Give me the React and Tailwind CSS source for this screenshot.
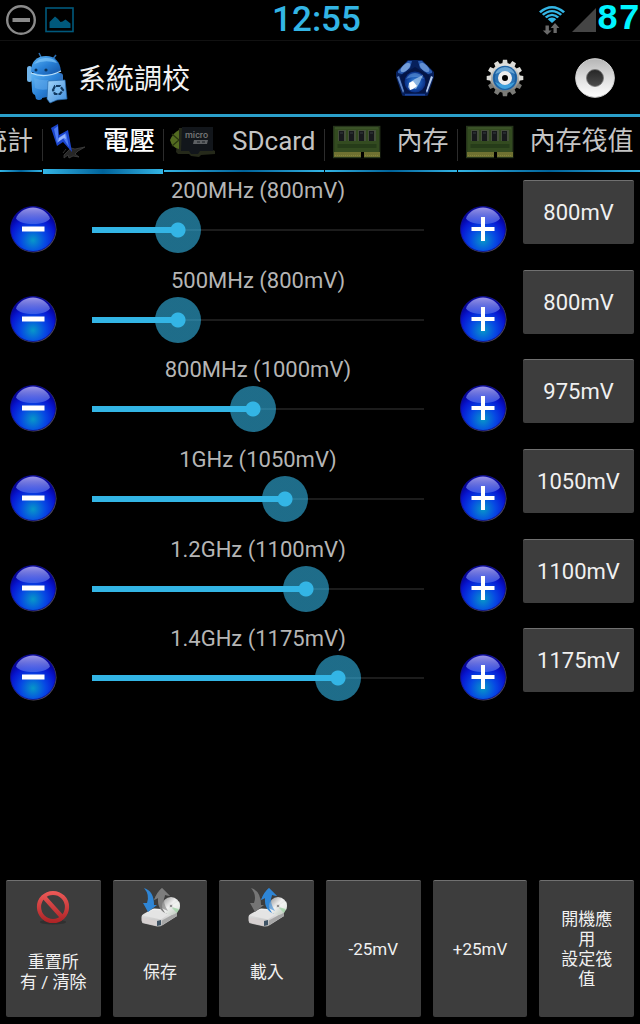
import { useState } from "react";

const MIN_MV = 600;
const MAX_MV = 1375;
const STEP_MV = 25;

const frequencies = [
  { id: "200", label: "200MHz (800mV)", mv: 800 },
  { id: "500", label: "500MHz (800mV)", mv: 800 },
  { id: "800", label: "800MHz (1000mV)", mv: 975 },
  { id: "1000", label: "1GHz (1050mV)", mv: 1050 },
  { id: "1200", label: "1.2GHz (1100mV)", mv: 1100 },
  { id: "1400", label: "1.4GHz (1175mV)", mv: 1175 },
];

const clamp = (mv) => Math.min(MAX_MV, Math.max(MIN_MV, mv));

/* ---------- Status bar icons ---------- */

const DndIcon = () => (
  <svg width="32" height="32" viewBox="0 0 32 32" fill="none">
    <circle cx="16" cy="16" r="13.8" stroke="#8a8a8a" strokeWidth="2.4" />
    <path d="M7.5 16h17.5" stroke="#8a8a8a" strokeWidth="4" />
  </svg>
);

const PictureIcon = () => (
  <svg width="30" height="26" viewBox="0 0 30 26" fill="none">
    <rect x="1" y="1" width="27" height="23.5" stroke="#00597c" strokeWidth="1.6" />
    <path
      d="M4.5 21v-6l5.500-5.500 3 2.500 2.500 3 2-.5 3-2 2.500 2 2.500 2v4.500z"
      fill="#00597c"
    />
  </svg>
);

const WifiIcon = () => (
  <svg width="28" height="30" viewBox="0 0 28 30">
    <path d="M14 18 1 6.500Q14-4.500 27 6.500z" fill="#33b5e5" />
    <g fill="none" stroke="#000" strokeWidth="1.300">
      <path d="M2.500 9.200Q14-.8 25.500 9.200" />
      <path d="M5.500 11.800Q14 4.200 22.500 11.800" />
      <path d="M8.500 14.200Q14 9.200 19.500 14.200" />
    </g>
    <path d="M7.500 20.500h3.400v5h2.800l-4.500 4.300-4.400-4.300h2.700z" fill="#6a6a6a" />
    <path d="M15.500 28v-5h-2.800l4.300-5 4.400 5h-2.600v5z" fill="#6a6a6a" />
  </svg>
);

const SignalIcon = () => (
  <svg width="25" height="26" viewBox="0 0 25 26">
    <path d="M0 25 24 1v24z" fill="#454545" />
  </svg>
);

/* ---------- Header icons ---------- */

const TunerIcon = () => (
  <svg width="42" height="52" viewBox="0 0 42 52">
    <defs>
      <linearGradient id="droid" x1="0" y1="0" x2="1" y2="1">
        <stop offset="0" stopColor="#61b7f5" />
        <stop offset=".5" stopColor="#2a82d8" />
        <stop offset="1" stopColor="#1252a4" />
      </linearGradient>
      <linearGradient id="card" x1="0" y1="0" x2="1" y2="1">
        <stop offset="0" stopColor="#a4d6fa" />
        <stop offset="1" stopColor="#3c8bdc" />
      </linearGradient>
    </defs>
    <path d="m13 1 3 6M30 3l-4 5" stroke="#2c6daf" strokeWidth="1.500" />
    <rect x="1" y="14" width="5" height="16" rx="2.500" fill="#70b4ea" />
    <rect x="31" y="21" width="6" height="16" rx="3" fill="#3274c2" />
    <path d="M5 21h29l-1 22q-1 3-4 3l-2 1h-6v-2l-5 1v1q-3 2-6 0l-1-4q-3-1-3-5z" fill="url(#droid)" />
    <path d="M5 20C5 9 11 4 20 4s14 6 15 15q-14 7-30 1z" fill="url(#droid)" />
    <path d="M8 12q5-7 13-6 7 0 10 5-12-4-23 1z" fill="#84c9fa" opacity=".65" />
    <path d="M5 21q14 6 30-2" stroke="#b9e0fb" strokeWidth="1.200" fill="none" />
    <path d="M8 26q8 3 15 2v9q-8 2-14-1z" fill="#69afed" opacity=".5" />
    <circle cx="10" cy="18" r="1.500" fill="#0b3157" />
    <circle cx="20" cy="18" r="1.600" fill="#0b3157" />
    <path d="m22 29 17-1 2 19-10 1-7 3-3-4z" fill="url(#card)" stroke="#2468ac" strokeWidth=".7" />
    <path
      d="m27 38 2-4h5l3 4-3 4h-5z"
      fill="#7cbdf2"
      stroke="#123a62"
      strokeWidth="2.200"
      strokeDasharray="4.500 1"
    />
  </svg>
);

const PentagonIcon = () => (
  <svg width="40" height="38" viewBox="0 0 40 38">
    <defs>
      <radialGradient id="pent">
        <stop offset="0" stopColor="#4a90dd" />
        <stop offset=".5" stopColor="#1a58b4" />
        <stop offset="1" stopColor="#0a2f86" />
      </radialGradient>
    </defs>
    <path d="M13 1h14l12 12v5l-6 18q0 1-2 1H9q-2 0-2-1L1 18v-5z" fill="#07205c" />
    <path d="M13 2h4l-2 7-8 6-4-1v-2z" fill="#2b5cb0" />
    <path d="M27 2h-4l2 7 8 6 4-1v-2z" fill="#2b5cb0" />
    <ellipse cx="10.500" cy="8.500" rx="6" ry="3" transform="rotate(-42 10.500 8.500)" fill="#86aee2" opacity=".8" />
    <ellipse cx="29.500" cy="8.500" rx="6" ry="3" transform="rotate(42 29.500 8.500)" fill="#6f9bd9" opacity=".8" />
    <path d="m2 18 2-1 5 15-1 2z" fill="#5f86c8" />
    <path d="m38 18-2-1-5 15 1 2z" fill="#b4cbee" />
    <path d="M10 35.800h20" stroke="#1c48a0" strokeWidth="1.500" />
    <path d="m20 8 15 9-5 17H10L5 17z" fill="#041546" />
    <circle cx="20" cy="23" r="10.500" fill="url(#pent)" />
    <path d="M11 20q3-6 9-6t9 6q-9-4-18 0z" fill="#6ea6e6" opacity=".5" />
    <path d="m14 24 6-4 8-4-3 7-4 7-3-1-3 2-2-3z" fill="#9fc3e8" opacity=".8" />
    <path d="m14 24 4-2 4 5-4 3-3 1z" fill="#fff" />
  </svg>
);

const teeth = [0, 30, 60, 90, 120, 150, 180, 210, 240, 270, 300, 330];

const GearIcon = () => (
  <svg width="38" height="38" viewBox="0 0 38 38">
    <defs>
      <linearGradient id="gear" x1="0" y1="0" x2="0" y2="38" gradientUnits="userSpaceOnUse">
        <stop offset="0" stopColor="#f4f4f2" />
        <stop offset=".6" stopColor="#a5a5a1" />
        <stop offset="1" stopColor="#5e5e5a" />
      </linearGradient>
    </defs>
    <circle cx="19" cy="19" r="15" fill="url(#gear)" />
    {teeth.map((deg) => (
      <path
        key={deg}
        d="m16.300 5 .6-4.300h4.200l.6 4.300z"
        fill={deg > 90 && deg < 270 ? "#7b7b77" : "#dcdcd8"}
        transform={`rotate(${deg} 19 19)`}
      />
    ))}
    <circle cx="19" cy="19" r="12.300" fill="#2a73b5" />
    <circle cx="19" cy="19" r="11" fill="none" stroke="#1c5c9b" strokeWidth="1.500" />
    <path d="M9 15q3-7 10-7t10 7q-10-5-20 0z" fill="#79b3dd" opacity=".8" />
    <path d="M9 23q4 7 10 7t10-7q-10 5-20 0z" fill="#46b4ee" opacity=".7" />
    <circle cx="19" cy="19" r="5" fill="#000" stroke="#ededed" strokeWidth="4" />
  </svg>
);

const DiscIcon = () => (
  <svg width="42" height="42" viewBox="0 0 42 42">
    <defs>
      <linearGradient id="disc" x1="0" y1="0" x2="0" y2="1">
        <stop offset="0" stopColor="#b5b5b5" />
        <stop offset=".5" stopColor="#dedede" />
        <stop offset="1" stopColor="#fff" />
      </linearGradient>
      <linearGradient id="hole" x1="0" y1="0" x2="0" y2="1">
        <stop offset="0" stopColor="#262626" />
        <stop offset="1" stopColor="#4c4c4c" />
      </linearGradient>
    </defs>
    <circle cx="21" cy="21" r="19.300" fill="url(#disc)" stroke="#d6d6d6" />
    <circle cx="21" cy="21" r="8.500" fill="url(#hole)" stroke="#777" strokeWidth=".8" />
  </svg>
);

/* ---------- Tab icons ---------- */

const VoltageIcon = () => (
  <svg width="36" height="36" viewBox="0 0 36 36">
    <path
      d="m13 31 7-7 4 1 10-2-7 4-3 3 4 3-6-1-4 2-1-3-4 3zM15 25l-3 4"
      fill="#262626"
      stroke="#404040"
      strokeWidth=".8"
    />
    <path d="M0 4 7 0l1 11 9-5 4 22-9-10-6 4z" fill="#1c45cc" />
    <path d="m3 5 4-3 0 12 8-5 3 14-6-9-6 5z" fill="#4d7cf3" />
    <path d="m8 14 6-4 1 5-2-1-6 4z" fill="#b4ccff" opacity=".7" />
  </svg>
);

const SdIcon = () => (
  <svg width="48" height="32" viewBox="0 0 48 32">
    <path d="M11 2h34v22l2 1v3l-14 1-2 2-8-1-2-2H10l-2-2z" fill="#25291a" />
    <path d="M14 1h31v24H32l-2 3h-7l-2-3h-8z" fill="#12161b" />
    <path d="M11 4v19Q4 22 2 14q3-7 9-10z" fill="#536b20" />
    <path d="m11 14-7 6m7-6L4 8" stroke="#283610" strokeWidth="1.200" />
    <text x="17" y="12" fill="#777" fontSize="9" fontWeight="500" fontFamily="Roboto, sans-serif">
      micro
    </text>
    <path d="M26 14h14l-1 4H25z" fill="#5d6063" />
    <path d="M29 16h3m2 0h3" stroke="#191d22" strokeWidth="1.200" />
  </svg>
);

const RamIcon = () => (
  <svg width="48" height="34" viewBox="0 0 48 34">
    <rect x=".7" y="1.500" width="46" height="31" fill="#334b20" stroke="#26351b" strokeWidth="1.400" />
    <path d="M2 3h43" stroke="#455c30" />
    {[6, 16, 26, 36].map((x) => (
      <g key={x}>
        <rect x={x - 1} y="5" width="8" height="11" fill="#454f3c" />
        <rect x={x} y="6" width="5" height="10" fill="#17191c" />
        <path d={`M${x + 1} 8h3`} stroke="#393c40" />
      </g>
    ))}
    <rect x="4.500" y="19" width="39" height="4" fill="#263c19" />
    <path d="M1 27h27v5H1zM31 27h16v5H31z" fill="#6f7131" />
    <path d="M2 30.500h26m4 0h14" stroke="#85843c" strokeDasharray="1 1" />
    <path d="M28 27h3v6h-3z" fill="#000" />
  </svg>
);

/* ---------- Bottom button icons ---------- */

const ForbidIcon = () => (
  <svg width="40" height="40" viewBox="0 0 40 40" fill="none">
    <defs>
      <linearGradient id="forbid" x1="0" y1="4" x2="0" y2="36" gradientUnits="userSpaceOnUse">
        <stop offset="0" stopColor="#ee5a58" />
        <stop offset="1" stopColor="#ac2225" />
      </linearGradient>
    </defs>
    <ellipse cx="20" cy="35" rx="13" ry="2.500" fill="#303030" />
    <circle cx="20" cy="20" r="14" stroke="url(#forbid)" strokeWidth="4.200" />
    <path d="m11 10 18 20" stroke="url(#forbid)" strokeWidth="4.400" />
  </svg>
);

const DriveIcon = ({ name, down, up }) => (
  <svg width="40" height="40" viewBox="0 0 40 40">
    <defs>
      <linearGradient id={`${name}-body`} x1="0" y1="0" x2="0" y2="1">
        <stop offset="0" stopColor="#f4f4f4" />
        <stop offset="1" stopColor="#b5b5b5" />
      </linearGradient>
      <linearGradient id={`${name}-cd`} x1="0" y1="0" x2="1" y2="1">
        <stop offset="0" stopColor="#8c8c8c" />
        <stop offset=".45" stopColor="#f0f0f0" />
        <stop offset="1" stopColor="#b4c2b4" />
      </linearGradient>
    </defs>
    <path
      d="M1.500 30q0-2 2-3l8-4.500q1.500-1 3-1l20 1.500q2.500 0 2.500 3v3l-14 9q-3 2-6 1.500l-13-3q-2.500-.5-2.500-3z"
      fill={`url(#${name}-body)`}
    />
    <path d="M3 28.500 13 23l20 1-12 8.500z" fill="#e4e4e4" />
    <path d="M2 30.500q8 2.500 15 3v5.500l-13-3q-2-.5-2-3z" fill="#d6d0d0" />
    <path d="m17 34 4-1v5l-4 1z" fill="#3f5364" />
    <path d="M22 33.500 37 25v4L22 38z" fill="#a6a6a6" />
    <path d="M28 27Q17 24 18 11l-4 2q3-8 8-12l8 8-5-1q-4 9 3 19z" fill={up} />
    <circle cx="31" cy="19" r="9" fill={`url(#${name}-cd)`} />
    <path d="m31 19 8-5q2 4 0 9z" fill="#fff" opacity=".5" />
    <path d="m31 20 8 2-2 4z" fill="#93d49b" opacity=".6" />
    <circle cx="31" cy="19" r="1.800" fill="#8e8e8e" stroke="#e6e6e6" />
    <path d="M28 24Q19 22 18 11l-4 2q3-8 8-12l8 8-5-1q-3 7 3 16z" fill={up} opacity=".6" />
    <path d="M4 1q10 3 10 17h3l-9 7-5-9h4Q10 8 4 1z" fill={down} />
  </svg>
);

const tabs = [
  { id: "stats", label: "統計", icon: null, box: "w-[42px] justify-end pr-[9px]" },
  { id: "voltage", label: "電壓", icon: <VoltageIcon />, box: "pl-2 pr-2 gap-4" },
  { id: "sdcard", label: "SDcard", icon: <SdIcon />, box: "pl-1 pr-2 gap-4" },
  { id: "memory", label: "內存", icon: <RamIcon />, box: "pl-2 pr-2 gap-4" },
  { id: "threshold", label: "內存筏值", icon: <RamIcon />, box: "pl-2 pr-2 gap-4" },
];

const RoundButton = ({ plus, label, onClick }) => (
  <button type="button" aria-label={label} onClick={onClick} className="shrink-0">
    <svg width="48" height="48" viewBox="0 0 48 48">
      <defs>
        <radialGradient id="ball" cx=".5" cy=".75" r=".62">
          <stop offset="0" stopColor="#0798c8" />
          <stop offset=".45" stopColor="#0648e4" />
          <stop offset=".8" stopColor="#0717d2" />
          <stop offset="1" stopColor="#0505a0" />
        </radialGradient>
        <linearGradient id="gloss" x1="0" y1="0" x2="0" y2="1">
          <stop offset="0" stopColor="#9a94e6" />
          <stop offset="1" stopColor="#5f7cf0" stopOpacity=".55" />
        </linearGradient>
      </defs>
      <circle cx="24.500" cy="24.500" r="23" fill="#55505a" />
      <circle cx="24" cy="24" r="22.500" fill="url(#ball)" stroke="#0a0a88" strokeWidth=".8" />
      <path
        d="M24 2.500c8 0 15 5 17 11-3 4-9 5.500-17 5.500S10 17.500 7 13.500c2-6 9-11 17-11z"
        fill="url(#gloss)"
      />
      <path
        d={plus ? "M12.500 24h23M24 12v24" : "M13 24h22.500"}
        stroke="#fff"
        strokeWidth={plus ? 4 : 5}
      />
    </svg>
  </button>
);

const FrequencyRow = ({ item, mv, onChange }) => {
  const fill = ((mv - MIN_MV) / (MAX_MV - MIN_MV)) * 100;

  return (
    <li className="flex items-start gap-4 pl-[9px] pr-[6px]">
      <div className="flex flex-1 items-end gap-3">
        <RoundButton label={`${item.label} -`} onClick={() => onChange(clamp(mv - STEP_MV))} />
        <div className="flex-1">
          <label
            htmlFor={`freq-${item.id}`}
            className="block h-7 text-center text-[22px] leading-6 text-[#b5b5b5]"
          >
            {item.label}
          </label>
          <div className="grid items-center">
            <div className="col-start-1 row-start-1 mx-[23px] h-[2px] bg-[#1c1c1c]">
              <div
                className="h-[6px] -translate-y-[2px] bg-[#33b5e5]"
                style={{ width: `${fill}%` }}
              />
            </div>
            <input
              id={`freq-${item.id}`}
              type="range"
              min={MIN_MV}
              max={MAX_MV}
              step={STEP_MV}
              value={mv}
              onChange={(e) => onChange(Number(e.target.value))}
              className="col-start-1 row-start-1 h-[46px] w-full appearance-none bg-transparent [&::-webkit-slider-thumb]:size-[46px] [&::-webkit-slider-thumb]:appearance-none [&::-webkit-slider-thumb]:rounded-full [&::-webkit-slider-thumb]:bg-[radial-gradient(circle,#33b5e5_7px,#33b5e599_8px)]"
            />
          </div>
        </div>
        <RoundButton plus label={`${item.label} +`} onClick={() => onChange(clamp(mv + STEP_MV))} />
      </div>
      <button
        type="button"
        className="mt-px h-16 w-[111px] rounded-xs border-t border-[#707070] bg-[#3d3d3d] text-[22px] text-[#f0f0f0]"
      >
        {mv}mV
      </button>
    </li>
  );
};

const ActionButton = ({ icon, onClick, children }) => (
  <button
    type="button"
    onClick={onClick}
    className="flex h-[137px] flex-col items-center rounded-xs border-t border-[#707070] bg-[#3d3d3d] text-[17px] leading-5 text-[#f0f0f0]"
  >
    {icon && <span className="pt-1.5">{icon}</span>}
    <span className="flex flex-1 items-center text-center">
      <span>{children}</span>
    </span>
  </button>
);

const App = () => {
  const [activeTab, setActiveTab] = useState("voltage");
  const [values, setValues] = useState(frequencies.map((f) => f.mv));

  const setValue = (index, mv) => {
    setValues(values.map((v, i) => (i === index ? mv : v)));
  };

  const shiftAll = (delta) => {
    setValues(values.map((v) => clamp(v + delta)));
  };

  return (
    <div className="flex min-h-screen flex-col overflow-hidden bg-black font-[Roboto,'Noto_Sans_CJK_TC',sans-serif] text-white">
      {/* Status bar */}
      <div className="flex h-[41px] items-center border-b border-[#111]">
        <div className="flex flex-1 items-center gap-2 pl-[5px]">
          <DndIcon />
          <PictureIcon />
        </div>
        <span className="pr-3 text-[35px] font-medium leading-10 text-[#33b5e5]">12:55</span>
        <div className="flex flex-1 items-center justify-end">
          <WifiIcon />
          <span className="pl-1.5">
            <SignalIcon />
          </span>
          <span className="font-['Liberation_Mono',monospace] text-[36px] font-bold leading-10 text-[#00f4ff]">
            87
          </span>
        </div>
      </div>

      {/* Header */}
      <header className="flex h-[76px] items-center border-b-[3px] border-[#2a9fca]">
        <div className="flex flex-1 items-center gap-2.5 pl-[26px]">
          <TunerIcon />
          <h1 className="pt-1 text-[28px] leading-9 text-[#f3f3f3]">系統調校</h1>
        </div>
        <button type="button" aria-label="CPU" className="flex w-[90px] justify-center">
          <PentagonIcon />
        </button>
        <button type="button" aria-label="設定" className="flex w-[90px] justify-center">
          <GearIcon />
        </button>
        <button type="button" aria-label="選單" className="flex w-[90px] justify-center">
          <DiscIcon />
        </button>
      </header>

      {/* Tabs */}
      <nav className="flex h-[57px] overflow-hidden">
        {tabs.map((tab, i) => (
          <div key={tab.id} className="flex shrink-0 last:grow">
            {i > 0 && <div className="mt-3 h-8 w-px bg-[#2c2c2c]" />}
            <button
              type="button"
              onClick={() => setActiveTab(tab.id)}
              className="flex grow flex-col"
            >
              <span
                className={`flex h-[51px] items-center whitespace-nowrap pb-0.5 text-[26px] ${tab.box} ${
                  activeTab === tab.id ? "font-medium text-white" : "text-[#c4c4c4]"
                }`}
              >
                {tab.icon}
                <span>{tab.label}</span>
              </span>
              <span className="flex h-[6px] w-full items-center">
                <span
                  className={`w-full bg-linear-to-r from-[#33b5e5] via-[#00639a] to-[#33b5e5] ${
                    activeTab === tab.id ? "h-[5px]" : "h-[2px]"
                  }`}
                />
              </span>
            </button>
          </div>
        ))}
      </nav>

      {/* Voltage list */}
      <main className="flex-1 pt-[5px]">
        <ul className="grid min-h-[538px] auto-rows-fr">
          {frequencies.map((item, i) => (
            <FrequencyRow
              key={item.id}
              item={item}
              mv={values[i]}
              onChange={(mv) => setValue(i, mv)}
            />
          ))}
        </ul>
      </main>

      {/* Bottom actions */}
      <footer className="grid grid-cols-6 gap-3 px-1.5 pb-[7px]">
        <ActionButton
          icon={<ForbidIcon />}
          onClick={() => setValues(frequencies.map((f) => f.mv))}
        >
          重置所
          <br />有 / 清除
        </ActionButton>
        <ActionButton icon={<DriveIcon name="save" down="#2f86d6" up="#7d7d7d" />}>
          保存
        </ActionButton>
        <ActionButton icon={<DriveIcon name="load" down="#757575" up="#2f86d6" />}>
          載入
        </ActionButton>
        <ActionButton onClick={() => shiftAll(-STEP_MV)}>-25mV</ActionButton>
        <ActionButton onClick={() => shiftAll(STEP_MV)}>+25mV</ActionButton>
        <ActionButton>
          開機應
          <br />用
          <br />
          設定筏
          <br />值
        </ActionButton>
      </footer>
    </div>
  );
};

export default App;
